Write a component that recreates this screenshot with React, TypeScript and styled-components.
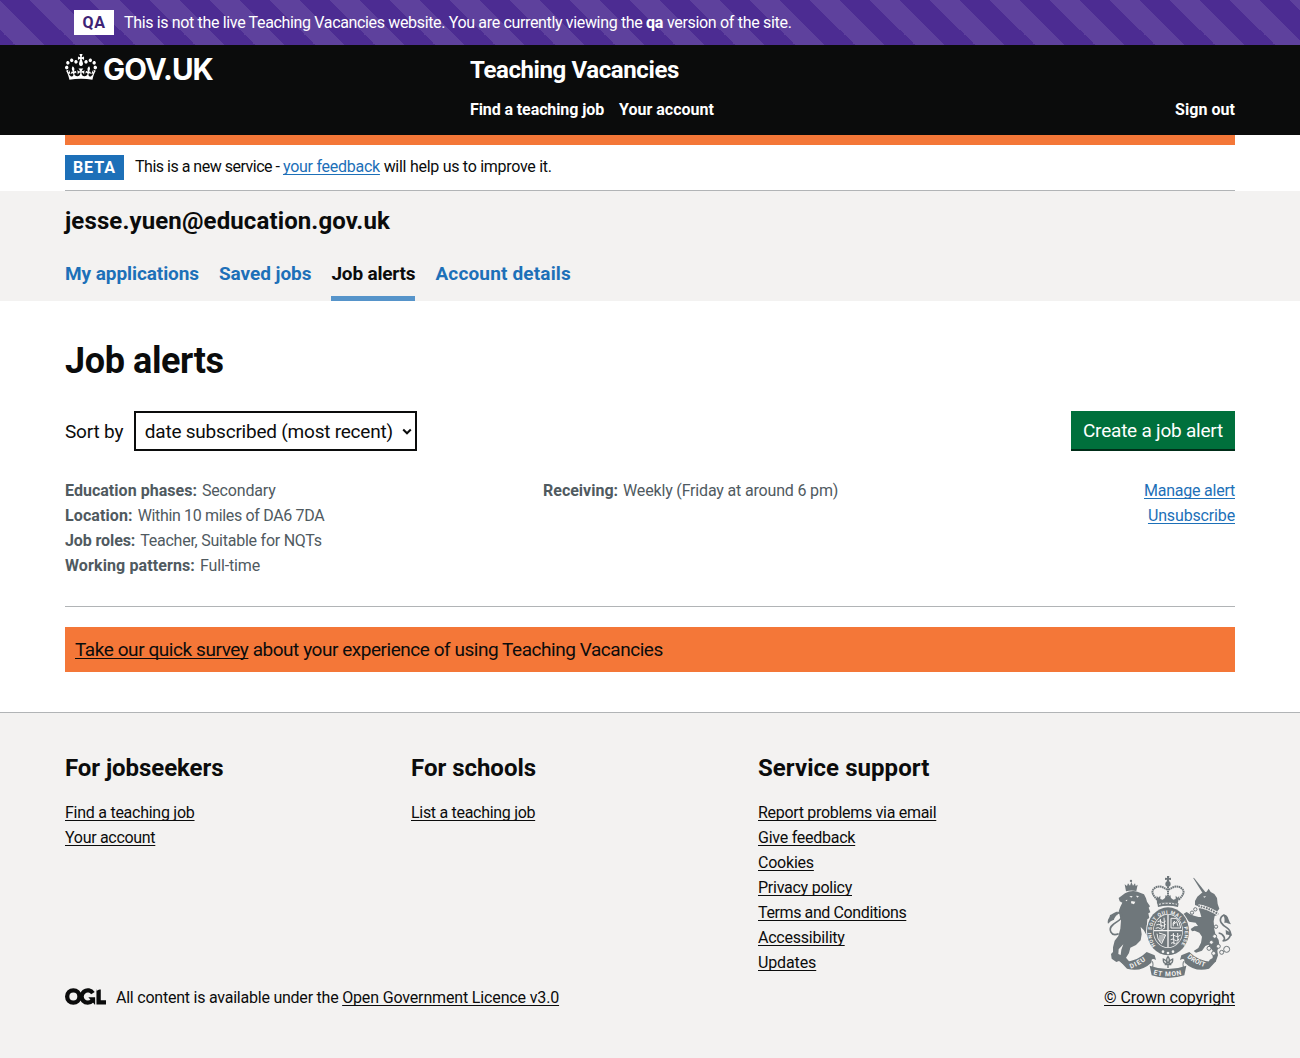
import React from "react";
import styled, { createGlobalStyle, css } from "styled-components";

const color = {
  ink: "#0b0c0c",
  link: "#1d70b8",
  secondary: "#505a5f",
  border: "#b1b4b6",
  panel: "#f3f2f1",
  orange: "#f47738",
  crest: "#6f777b",
};

const GlobalStyle = createGlobalStyle`
  * { box-sizing: border-box; }
  body {
    margin: 0;
    background: #fff;
    color: ${color.ink};
    font-family: Roboto, "Liberation Sans", Arial, sans-serif;
    font-size: 16px;
    line-height: 25px;
  }
  h1, h2, h3, p, ul, dl, dd, dt { margin: 0; padding: 0; }
  ul { list-style: none; }
`;

type Tracked = { $ls?: number };
const tracking = css<Tracked>`
  letter-spacing: ${(p) => p.$ls ?? -0.25}px;
`;

const Container = styled.div`
  width: 1170px;
  margin: 0 auto;
`;

const Text = styled.span<Tracked>`
  white-space: pre;
  ${tracking}
`;

const Strong = styled.strong<Tracked>`
  font-weight: 700;
  white-space: pre;
  ${tracking}
`;

const Link = styled.a<Tracked & { $tone?: "ink" }>`
  color: ${(p) => (p.$tone === "ink" ? color.ink : color.link)};
  text-decoration: underline;
  text-decoration-thickness: 1px;
  text-underline-offset: 2px;
  text-decoration-skip-ink: none;
  white-space: nowrap;
  ${tracking}
`;

/* Environment banner */

const EnvBanner = styled.div`
  height: 45px;
  color: #fff;
  background-color: #4c2c92;
  background-image: linear-gradient(
    45deg,
    #4c2c92 25%,
    #5e419d 25%,
    #5e419d 50%,
    #4c2c92 50%,
    #4c2c92 75%,
    #5e419d 75%
  );
  background-size: 60px 60px;
`;

const EnvInner = styled(Container)`
  display: flex;
  align-items: center;
  height: 45px;
  padding-left: 9px;
`;

const EnvTag = styled.strong`
  width: 40px;
  height: 25px;
  margin-right: 10px;
  line-height: 25px;
  text-align: center;
  letter-spacing: 0.6px;
  background: #fff;
  color: #3d2375;
`;

/* Header */

const Header = styled.header`
  height: 90px;
  background: ${color.ink};
  color: #fff;
`;

const HeaderGrid = styled(Container)`
  display: grid;
  grid-template-columns: 405px 1fr;
`;

const Logo = styled.a`
  display: flex;
  align-items: flex-start;
  padding-top: 9px;
`;

const Wordmark = styled.span`
  margin-left: 6px;
  font: 700 29.5px/30px Inter, Roboto, sans-serif;
  letter-spacing: -0.95px;
`;

const ServiceName = styled.div`
  padding-top: 10px;
  font-size: 24px;
  font-weight: 700;
  line-height: 30px;
  letter-spacing: -0.39px;
`;

const HeaderNav = styled.nav`
  display: flex;
  gap: 15px;
  margin-top: 12px;
`;

const NavLink = styled.a<Tracked & { $end?: boolean }>`
  font-weight: 700;
  margin-left: ${(p) => (p.$end ? "auto" : 0)};
  ${tracking}
`;

/* Phase banner */

const PhaseBanner = styled(Container)`
  display: flex;
  height: 56px;
  border-top: 10px solid ${color.orange};
  border-bottom: 1px solid ${color.border};
  padding-top: 9px;
`;

const PhaseTag = styled.strong`
  width: 59px;
  height: 25px;
  margin: 1px 11px 0 0;
  line-height: 25px;
  text-align: center;
  letter-spacing: 1px;
  background: ${color.link};
  color: #fff;
`;

/* Account panel */

const AccountPanel = styled.section`
  height: 110px;
  background: ${color.panel};
`;

const Email = styled.h2`
  padding-top: 15px;
  font-size: 24px;
  line-height: 30px;
  letter-spacing: 0.12px;
`;

const Tabs = styled.nav`
  display: flex;
  gap: 20px;
  margin-top: 15px;
`;

const Tab = styled.a<Tracked & { $current?: boolean }>`
  height: 50px;
  padding-top: 10px;
  font-size: 19px;
  font-weight: 700;
  line-height: 25px;
  color: ${(p) => (p.$current ? color.ink : color.link)};
  border-bottom: 5px solid ${(p) => (p.$current ? "#5694ca" : "transparent")};
  ${tracking}
`;

/* Main */

const Main = styled(Container).attrs({ as: "main" })`
  display: flex;
  flex-direction: column;
  height: 411px;
  padding-top: 40px;
`;

const PageTitle = styled.h1`
  font-size: 36px;
  line-height: 40px;
  letter-spacing: -0.4px;
`;

const Toolbar = styled.div`
  display: flex;
  align-items: center;
  height: 40px;
  margin-top: 30px;
  font-size: 19px;
`;

const SelectBox = styled.button`
  display: flex;
  align-items: center;
  justify-content: space-between;
  width: 283px;
  height: 40px;
  margin-left: 11px;
  padding: 1px 3px 0 8.5px;
  border: 2px solid ${color.ink};
  background: #fff;
  color: ${color.ink};
  font: inherit;
`;

const PrimaryButton = styled.button`
  width: 164px;
  height: 40px;
  margin-left: auto;
  padding: 0 0 1px;
  border: 0;
  background: #00703c;
  box-shadow: inset 0 -2px 0 #002d18;
  color: #fff;
  font: inherit;
  line-height: 39px;
  letter-spacing: -0.22px;
`;

const AlertCard = styled.article`
  display: grid;
  grid-template-columns: 478px 1fr auto;
  height: 129px;
  margin-top: 27px;
  border-bottom: 1px solid ${color.border};
`;

const Facts = styled.dl`
  display: flex;
  flex-direction: column;
  color: ${color.secondary};
`;

const Fact = styled.div`
  display: flex;
  gap: 5px;
`;

const AlertActions = styled.div`
  display: flex;
  flex-direction: column;
  align-items: flex-end;
`;

const SurveyBanner = styled.div`
  height: 45px;
  margin-top: 20px;
  padding-left: 10px;
  font-size: 19px;
  line-height: 45px;
  background: ${color.orange};
`;

/* Footer */

const Footer = styled.footer`
  height: 346px;
  border-top: 1px solid ${color.border};
  background: ${color.panel};
`;

const FooterGrid = styled(Container)`
  display: grid;
  grid-template-columns: 1039px 131px;
  padding-top: 40px;
`;

const FooterColumns = styled.div`
  display: grid;
  grid-template-columns: 346px 347px 1fr;
`;

const FooterHeading = styled.h2<Tracked>`
  margin-bottom: 17px;
  font-size: 24px;
  line-height: 30px;
  ${tracking}
`;

const LinkList = styled.ul`
  display: flex;
  flex-direction: column;
`;

const LinkItem = styled.li`
  height: 25px;
`;

const Licence = styled.div`
  display: flex;
  margin-top: 10px;
`;

const OglMark = styled.svg`
  margin: 3px 10px 0 0;
`;

const CrownCopyright = styled.div`
  display: flex;
  flex-direction: column;
  justify-content: flex-end;
  align-items: flex-end;
`;

const CrestArt = styled.svg`
  margin: 0 3px 7px 0;
`;

const Crown = () => (
  <svg width="32" height="26" viewBox="0 0 132 97" preserveAspectRatio="none" fill="#fff">
    <path d="M25 30.2c3.5 1.5 7.7-.2 9.1-3.7 1.5-3.6-.2-7.8-3.9-9.2-3.6-1.4-7.6.3-9.1 3.9-1.4 3.5.3 7.5 3.9 9zM9 39.5c3.6 1.5 7.8-.2 9.2-3.7 1.5-3.6-.2-7.8-3.9-9.1-3.6-1.5-7.6.2-9.1 3.8-1.4 3.5.3 7.5 3.8 9zM4.4 57.2c3.5 1.5 7.7-.2 9.1-3.8 1.5-3.6-.2-7.7-3.9-9.1-3.5-1.5-7.6.3-9.1 3.8-1.4 3.5.3 7.6 3.9 9.1zm38.3-21.4c3.5 1.5 7.7-.2 9.1-3.8 1.5-3.6-.2-7.7-3.9-9.1-3.6-1.5-7.6.3-9.1 3.8-1.3 3.6.4 7.7 3.9 9.1zm64.4-5.6c-3.6 1.5-7.8-.2-9.1-3.7-1.5-3.6.2-7.8 3.8-9.2 3.6-1.4 7.7.3 9.2 3.9 1.3 3.5-.4 7.5-3.9 9zm15.9 9.3c-3.6 1.5-7.7-.2-9.1-3.7-1.5-3.6.2-7.8 3.7-9.1 3.6-1.5 7.7.2 9.2 3.8 1.5 3.5-.3 7.5-3.8 9zm4.7 17.7c-3.6 1.5-7.8-.2-9.2-3.8-1.5-3.6.2-7.7 3.9-9.1 3.6-1.5 7.7.3 9.2 3.8 1.3 3.5-.4 7.6-3.9 9.1zM89.3 35.8c-3.6 1.5-7.8-.2-9.2-3.8-1.4-3.6.2-7.7 3.9-9.1 3.6-1.5 7.7.3 9.2 3.8 1.4 3.6-.3 7.7-3.9 9.1zM69.7 17.7l8.9 4.7V9.3l-8.9 2.8c-.2-.3-.5-.6-.9-.9L72.4 0H59.6l3.5 11.2c-.3.3-.6.5-.9.9l-8.8-2.8v13.1l8.8-4.7c.3.3.6.7.9.9l-5 15.4v.1c-.2.8-.4 1.6-.4 2.4 0 4.1 3.1 7.5 7 8.1h.2c.3 0 .7.1 1 .1.4 0 .7 0 1-.1h.2c4-.6 7.1-4.1 7.1-8.1 0-.8-.1-1.7-.4-2.4V34l-5.1-15.4c.4-.2.7-.6 1-.9zM66 92.8c16.9 0 32.8 1.1 47.1 3.2 4-16.9 8.9-26.7 14-33.5l-9.6-3.4c1 4.9 1.1 7.2 0 10.2-1.5-1.4-3-4.3-4.2-8.7L108.6 76c2.8-2 5-3.2 7.5-3.3-4.4 9.4-10 11.9-13.6 11.2-4.3-.8-6.3-4.6-5.6-7.9 1-4.7 5.7-5.9 8-.5 4.3-8.7-3-11.4-7.6-8.8 7.1-7.2 7.9-13.5 2.1-21.1-8 6.1-8.1 12.3-4.5 20.8-4.7-5.4-12.1-2.5-9.5 6.2 3.4-5.2 7.9-2 7.2 3.1-.6 4.3-6.4 7.8-13.5 7.2-10.3-.9-10.9-8-11.2-13.8 2.5-.5 7.1 1.8 11 7.3L80.2 60c-4.1 4.4-8 5.3-12.3 5.4 1.4-4.4 8-11.6 8-11.6H55.5s6.4 7.2 7.9 11.6c-4.2-.1-8-1-12.3-5.4l1.4 16.4c3.9-5.5 8.5-7.7 10.9-7.3-.3 5.8-.9 12.8-11.1 13.8-7.2.6-12.9-2.9-13.5-7.2-.7-5 3.8-8.3 7.1-3.1 2.7-8.7-4.6-11.6-9.4-6.2 3.7-8.5 3.6-14.7-4.6-20.8-5.8 7.6-5 13.9 2.2 21.1-4.7-2.6-11.9.1-7.7 8.8 2.3-5.5 7.1-4.2 8.1.5.7 3.3-1.3 7.1-5.7 7.9-3.5.7-9-1.8-13.5-11.2 2.5.1 4.7 1.3 7.5 3.3l-4.7-15.4c-1.2 4.4-2.7 7.2-4.3 8.7-1.1-3-.9-5.3 0-10.2l-9.5 3.4c5 6.9 9.9 16.7 14 33.5 14.8-2.1 30.8-3.2 47.7-3.2z" />
  </svg>
);

const Ogl = () => (
  <OglMark width="41" height="17" viewBox="0 0 483 196" fill="none" stroke={color.ink} strokeWidth="51">
    <circle cx="98" cy="98" r="72.5" />
    <path d="M329 59A72.5 72.5 0 1 0 322 147" />
    <path d="M275 106h80v88h-3z" fill={color.ink} stroke="none" />
    <path d="M396 16v152h87" />
    <path d="M371 0h51l-51 32z" fill={color.panel} stroke="none" />
  </OglMark>
);

const Chevron = () => (
  <svg width="10" height="8" viewBox="0 0 10 8" fill="none" stroke={color.ink} strokeWidth="2">
    <path d="M1.2 1.5 5 5.3 8.8 1.5" />
  </svg>
);

const Crest = () => {
  const g = color.crest;
  const bg = color.panel;
  return (
    <CrestArt width="125" height="102" viewBox="51 33 375 306" fill={g}>
      <defs>
        <path id="garter" d="M197 242A50 57 0 1 1 271 242" />
        <path id="dieu" d="M122 311Q150 301 178 278" />
        <path id="etmon" d="M190 328Q234 340 279 328" />
        <path id="droit" d="M291 277Q318 300 350 308" />
      </defs>

      {/* lion */}
      <path d="M104 58l7 5 3-8 6 7 4-11 5 11 6-7 2 8 6-4-4 19q-16-4-31 1z" />
      <circle cx="123" cy="48" r="3.5" />
      <path d="M105 85q18-10 37-5l20 8 6 12 3 10 9 14-4 4 5 14-6 3 3 14-6 4-1 14 15 20-1 9 6 12-9 1-13-10-8-14-9-9 3 22-3 18-14 14-17 8-4 16-9 14 9 11-2 9-17-2-11-8-8 3-14-10-2-14 6-6 0-14 5-20 11-14 6-22 2-26-3-9-4-17 5-14 6-12-8-4-3-10z" />
      <path d="M118 94l10-1-4 5zM138 92l9 1-5 5zM124 108l12 2-4 8-9-3zM112 104l-6 2 5 3zM100 238l-6 16-2 16-7-3 1-14z" fill={bg} />
      <path d="M86 206c-24 10-32-14-18-26 14-12 32-18 26-32-4-7-13-5-15 2" fill="none" stroke={g} strokeWidth="5" />
      <path d="M54 176c-4-14 6-16 6-26 8-2 12-10 24-10-2 12-10 14-12 24-8 2-12 6-18 12z" />

      {/* unicorn */}
      <path d="M309 38l4 2 37 46-8 5z" />
      <path d="M315 108l7-13 14-12 14-3 6-9 6 10 11 6 8 12 2 18 5 14-6 8 3 10-11 4-3 16 2 24 4 18 9 14 2 16-6 16 2 14-7 20-21 0 3-7 9-5 0-22-13-18-9 4-10 14-18 6-7-5 14-9 8-16 3-18-8-12-14-6-8 2-4-7 12-8 10-1-7-10-20-3-11-14-5-10 9-5 9 6 13 5 14 4 8 0-4-14-4-11 16-10-9 0-10 2-8-3z" />
      <path d="M339 95l9-2-4 5z" fill={bg} />
      <path d="M325 123q26 4 60 24" fill="none" stroke={bg} strokeWidth="10" />
      <path d="M325 123q26 4 60 24" fill="none" stroke={g} strokeWidth="6" strokeDasharray="5 3" />
      <path d="M386 204c14 2 24 20 12 24 24-2 32-26 12-40-14-9-24-20-16-32 6-8 15-5 17 4" fill="none" stroke={g} strokeWidth="5" />
      <path d="M399 148c18 2 14 16 24 30-12-4-16-6-20-4 2-10 0-18-4-26zM407 194c8 6 18 6 19 18-8 0-13-4-18-3z" />
      <g fill={bg} stroke={g} strokeWidth="3">
        <circle cx="316" cy="133" r="5" />
        <circle cx="306" cy="143" r="5" />
        <circle cx="378" cy="185" r="5" />
        <circle cx="374" cy="214" r="6" />
        <circle cx="364" cy="232" r="6" />
        <circle cx="357" cy="250" r="6" />
        <circle cx="371" cy="265" r="6" />
        <circle cx="385" cy="244" r="6" />
        <circle cx="395" cy="262" r="6" />
        <circle cx="410" cy="253" r="9" />
      </g>

      {/* garter and shield */}
      <ellipse cx="234" cy="199" rx="66" ry="75" fill={bg} />
      <ellipse cx="234" cy="199" rx="63" ry="72" />
      <ellipse cx="234" cy="198" rx="45" ry="51" fill={bg} />
      <ellipse cx="234" cy="198" rx="43" ry="49" />
      <text fill={bg} fontSize="15" fontWeight="700" fontFamily="Roboto, sans-serif">
        <textPath href="#garter" textLength="246">HONI SOIT QUI MAL Y PENSE</textPath>
      </text>
      <path d="M234 150v97M192 197h84" stroke={bg} strokeWidth="4" />
      <g fill="none" stroke={bg} strokeWidth="3">
        <path d="M203 170q8-5 12 1t12-3M199 180q8-5 14 1t14-3M197 190q8-5 14 1t14-3M211 162l3 26M222 158l2 30" />
        <path d="M243 235q8-5 10 0t10-3M242 224q8-5 12 1t14-3M242 212q8-5 14 1t16-3M250 204l2 34M263 204l1 26" />
        <path d="M243 160h16q11 12 13 29h-29zM250 184q-3-12 4-16l-3 10 9-8 4 14M201 206q0 18 14 30l12-26-20-6M210 210v20M216 210v20M222 210v10" />
      </g>
      <g fill={bg}>
        <circle cx="219" cy="260" r="4" />
        <circle cx="234" cy="264" r="4" />
        <circle cx="249" cy="260" r="4" />
      </g>

      {/* royal crown */}
      <path d="M231 33h7l-1 6 6-1v7l-6-1 1 7h-8l1-7-6 1v-7l6 1z" />
      <circle cx="234" cy="57" r="8" />
      <path d="M202 104Q180 84 191 72Q207 56 231 74M266 104Q288 84 277 72Q261 56 237 74" fill="none" stroke={g} strokeWidth="6" strokeDasharray="5 1.5" />
      <path d="M234 64v32" stroke={g} strokeWidth="6" strokeDasharray="5 1.5" />
      <path d="M200 92l5 6 6-6 0 10 7 2 7-5 2-9 7 5 7-5 2 9 7 5 7-2 0-10 6 6 5-6-5 24q-31-7-62 0z" />
      <path d="M202 115q32-7 64 0l-2 11q-30-7-60 0z" />
      <path d="M207 118q27-6 54 0" fill="none" stroke={bg} strokeWidth="3" strokeDasharray="6 4" />

      {/* motto scroll */}
      <path d="M90 289q46 6 80-28l24 10 4 14q-16-8-14 8-32 30-73 18z" />
      <path d="M378 289q-46 6-80-28l-24 10-4 14q16-8 14 8 32 30 73 18z" />
      <path d="M188 308q4-24-8-20M280 308q-4-24 8-20" fill="none" stroke={g} strokeWidth="3" />
      <path d="M179 302l6 29q49 16 98 0l6-29q-55 20-110 0z" />
      <g fill={bg} fontWeight="700" fontFamily="Roboto, sans-serif">
        <text fontSize="20"><textPath href="#dieu" textLength="52">DIEU</textPath></text>
        <text fontSize="20"><textPath href="#etmon" textLength="86">ET MON</textPath></text>
        <text fontSize="20"><textPath href="#droit" textLength="60">DROIT</textPath></text>
      </g>
      <path d="M234 275q-8 10 0 20q8-10 0-20zM231 296q-13 0-11-14q10 4 12 13M237 296q13 0 11-14q-10 4-12 13M224 299h20M234 298v11" fill="none" stroke={g} strokeWidth="4" />
    </CrestArt>
  );
};

type Item = { label: string; ls?: number };
const footerColumns: { title: string; ls: number; items: Item[] }[] = [
  {
    title: "For jobseekers",
    ls: -0.07,
    items: [{ label: "Find a teaching job", ls: -0.26 }, { label: "Your account", ls: -0.3 }],
  },
  { title: "For schools", ls: -0.02, items: [{ label: "List a teaching job", ls: -0.3 }] },
  {
    title: "Service support",
    ls: 0.06,
    items: [
      { label: "Report problems via email", ls: -0.3 },
      { label: "Give feedback" },
      { label: "Cookies", ls: -0.22 },
      { label: "Privacy policy" },
      { label: "Terms and Conditions", ls: -0.39 },
      { label: "Accessibility", ls: -0.22 },
      { label: "Updates", ls: -0.12 },
    ],
  },
];

const facts: { term: string; value: string; termLs: number; valueLs: number }[] = [
  { term: "Education phases:", value: "Secondary", termLs: 0.03, valueLs: -0.18 },
  { term: "Location:", value: "Within 10 miles of DA6 7DA", termLs: 0.1, valueLs: -0.34 },
  { term: "Job roles:", value: "Teacher, Suitable for NQTs", termLs: -0.1, valueLs: -0.24 },
  { term: "Working patterns:", value: "Full-time", termLs: 0.11, valueLs: -0.15 },
];

export default function App() {
  return (
    <>
      <GlobalStyle />
      <EnvBanner>
        <EnvInner>
          <EnvTag>QA</EnvTag>
          <Text $ls={-0.345}>This is not the live Teaching Vacancies website. You are currently viewing the </Text>
          <Strong $ls={-0.2}>qa</Strong>
          <Text $ls={-0.31}> version of the site.</Text>
        </EnvInner>
      </EnvBanner>

      <Header>
        <HeaderGrid>
          <Logo>
            <Crown />
            <Wordmark>GOV.UK</Wordmark>
          </Logo>
          <div>
            <ServiceName>Teaching Vacancies</ServiceName>
            <HeaderNav>
              <NavLink $ls={-0.1}>Find a teaching job</NavLink>
              <NavLink $ls={0}>Your account</NavLink>
              <NavLink $ls={0.05} $end>Sign out</NavLink>
            </HeaderNav>
          </div>
        </HeaderGrid>
      </Header>

      <PhaseBanner>
        <PhaseTag>BETA</PhaseTag>
        <Text $ls={-0.49}>This is a new service - </Text>
        <Link $ls={-0.26}>your feedback</Link>
        <Text $ls={-0.28}> will help us to improve it.</Text>
      </PhaseBanner>

      <AccountPanel>
        <Container>
          <Email>jesse.yuen@education.gov.uk</Email>
          <Tabs>
            <Tab $ls={-0.08}>My applications</Tab>
            <Tab $ls={-0.06}>Saved jobs</Tab>
            <Tab $ls={-0.18} $current>Job alerts</Tab>
            <Tab $ls={0.16}>Account details</Tab>
          </Tabs>
        </Container>
      </AccountPanel>

      <Main>
        <PageTitle>Job alerts</PageTitle>
        <Toolbar>
          <Text $ls={-0.17}>Sort by</Text>
          <SelectBox>
            <Text $ls={-0.22}>date subscribed (most recent)</Text>
            <Chevron />
          </SelectBox>
          <PrimaryButton>Create a job alert</PrimaryButton>
        </Toolbar>

        <AlertCard>
          <Facts>
            {facts.map((f) => (
              <Fact key={f.term}>
                <Strong as="dt" $ls={f.termLs}>{f.term}</Strong>
                <Text as="dd" $ls={f.valueLs}>{f.value}</Text>
              </Fact>
            ))}
          </Facts>
          <Facts>
            <Fact>
              <Strong as="dt" $ls={0}>Receiving:</Strong>
              <Text as="dd" $ls={-0.17}>Weekly (Friday at around 6 pm)</Text>
            </Fact>
          </Facts>
          <AlertActions>
            <Link $ls={-0.23}>Manage alert</Link>
            <Link $ls={-0.15}>Unsubscribe</Link>
          </AlertActions>
        </AlertCard>

        <SurveyBanner>
          <Link $tone="ink" $ls={-0.43}>Take our quick survey</Link>
          <Text $ls={-0.46}> about your experience of using Teaching Vacancies</Text>
        </SurveyBanner>
      </Main>

      <Footer>
        <FooterGrid>
          <div>
            <FooterColumns>
              {footerColumns.map((c) => (
                <div key={c.title}>
                  <FooterHeading $ls={c.ls}>{c.title}</FooterHeading>
                  <LinkList>
                    {c.items.map((i) => (
                      <LinkItem key={i.label}>
                        <Link $tone="ink" $ls={i.ls}>{i.label}</Link>
                      </LinkItem>
                    ))}
                  </LinkList>
                </div>
              ))}
            </FooterColumns>
            <Licence>
              <Ogl />
              <Text $ls={-0.23}>All content is available under the </Text>
              <Link $tone="ink" $ls={-0.15}>Open Government Licence v3.0</Link>
            </Licence>
          </div>
          <CrownCopyright>
            <Crest />
            <Link $tone="ink" $ls={-0.09}>© Crown copyright</Link>
          </CrownCopyright>
        </FooterGrid>
      </Footer>
    </>
  );
}
